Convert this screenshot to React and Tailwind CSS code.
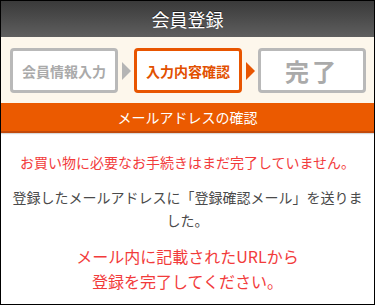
const font = { fontFamily: '"Noto Sans CJK JP", "Noto Sans", sans-serif' };

const Arrow = ({ color }) => (
  <div className="w-[16px] flex justify-center shrink-0">
    <div className={`w-0 h-0 border-y-[9px] border-y-transparent border-l-[9px] ${color}`} />
  </div>
);

export default function App() {
  return (
    <div className="w-[375px] h-[305px] bg-white border border-black flex flex-col overflow-hidden" style={font}>
      <div className="h-[36px] shrink-0 bg-gradient-to-b from-[#3a3a3a] to-[#5f5f5f] flex items-center justify-center">
        <h1 className="text-white text-[18px] leading-none tracking-[0px] [text-shadow:0_-1px_0_rgba(0,0,0,0.5)]">会員登録</h1>
      </div>

      <div className="h-[66px] shrink-0 bg-[#fdf7ec] flex items-center pl-[9px] pr-[8px] pt-[1px]">
        <div className="flex-1 h-[45px] bg-white border-[3px] border-[#b9b9b9] rounded-[4px] flex items-center justify-center">
          <span className="text-[14px] font-bold text-[#aaaaaa] leading-none">会員情報入力</span>
        </div>
        <Arrow color="border-l-[#b5b5b5]" />
        <div className="flex-1 h-[45px] bg-white border-[3px] border-[#e85500] rounded-[4px] flex items-center justify-center">
          <span className="text-[14px] font-bold text-[#e25000] leading-none">入力内容確認</span>
        </div>
        <Arrow color="border-l-[#e85500]" />
        <div className="flex-1 h-[45px] bg-white border-[3px] border-[#b9b9b9] rounded-[4px] flex items-center justify-center">
          <span className="text-[24px] font-bold text-[#aaaaaa] leading-none tracking-[3px]">完了</span>
        </div>
      </div>

      <div className="h-[30px] shrink-0 bg-[#eb5a00] border-b-2 border-[#c24a0c] shadow-[0_1px_1px_rgba(0,0,0,0.15)] flex items-center justify-center">
        <span className="text-white text-[14px] leading-none">メールアドレスの確認</span>
      </div>

      <div className="flex-1 px-[11px] pt-[18px] text-center">
        <p className="text-[14px] leading-[23px] text-[#f23b3b]">お買い物に必要なお手続きはまだ完了していません。</p>
        <p className="mt-[12px] text-[14px] leading-[23px] text-[#4a4a4a]">登録したメールアドレスに「登録確認メール」を送りました。</p>
        <p className="mt-[12px] text-[16px] leading-[25px] text-[#f23b3b]">
          メール内に記載されたURLから<br />登録を完了してください。
        </p>
      </div>
    </div>
  );
}
